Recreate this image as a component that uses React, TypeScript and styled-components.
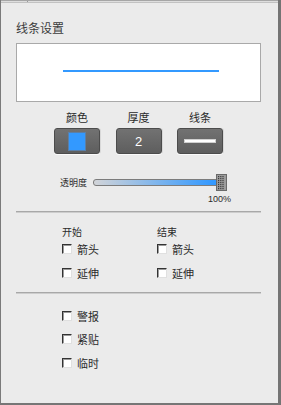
import React from "react";
import styled, { createGlobalStyle } from "styled-components";

const Global = createGlobalStyle`
  html, body { margin: 0; padding: 0; background: #ebebeb; }
  body { font-family: "Noto Sans CJK SC", "Liberation Sans", sans-serif; }
  * { box-sizing: border-box; }
`;

const Panel = styled.div`
  width: 281px;
  height: 405px;
  background: #ebebeb;
  border-left: 1px solid #7a7a7a;
  border-right: 3px solid #747474;
  border-bottom: 2px solid #767676;
  display: flex;
  flex-direction: column;
  color: #2a2a2a;
`;

const TopStrip = styled.div`
  height: 3px;
  display: flex;
  background: #dedede;
  border-top: 1px solid #a6a6a6;
  border-bottom: 1px solid #c2c2c2;
`;

const Tick = styled.div`
  margin-left: 26px;
  width: 1px;
  background: #9a9a9a;
`;

const Content = styled.div`
  padding: 0 17px 0 15px;
  display: flex;
  flex-direction: column;
`;

const Title = styled.div`
  margin-top: 17px;
  font-size: 12px;
  line-height: 16px;
  color: #3c3c3c;
`;

const Preview = styled.div`
  margin-top: 7px;
  height: 59px;
  background: #fff;
  border: 1px solid #a9a9a9;
  padding-top: 26px;
  padding-left: 46px;
`;

const PreviewLine = styled.div`
  width: 156px;
  height: 2px;
  background: #3399ff;
`;

const Controls = styled.div`
  margin-top: 8px;
  display: flex;
  justify-content: center;
  gap: 15.5px;
`;

const ControlCol = styled.div`
  width: 46px;
  display: flex;
  flex-direction: column;
  align-items: center;
  gap: 4px;
`;

const ControlLabel = styled.div`
  font-size: 11px;
  line-height: 14px;
  color: #2a2a2a;
`;

const ToolButton = styled.div`
  width: 46px;
  height: 26px;
  border-radius: 3px;
  border: 1px solid #4c4c4c;
  background: linear-gradient(#727272, #5e5e5e);
  box-shadow: 0 1px 0 #fafafa, 1px 0 0 #d8d8d8;
  display: flex;
  align-items: center;
  justify-content: center;
  color: #fff;
  font-family: "Liberation Sans", sans-serif;
  font-size: 13px;
`;

const Swatch = styled.div<{ $color: string }>`
  width: 18px;
  height: 19px;
  background: ${(p) => p.$color};
  border: 1px solid #5a7fa8;
`;

const LineSample = styled.div`
  width: 32px;
  height: 4px;
  background: #fff;
  border: 1px solid #d0d0d0;
`;

const SliderRow = styled.div`
  margin-top: 20px;
  padding-left: 44px;
  display: flex;
  align-items: center;
  gap: 6px;
  height: 17px;
`;

const SmallLabel = styled.div`
  font-size: 9px;
  line-height: 11px;
  color: #2a2a2a;
`;

const TrackWrap = styled.div`
  position: relative;
  width: 134px;
  height: 17px;
  display: flex;
  align-items: center;
`;

const Track = styled.div`
  width: 127px;
  height: 7px;
  border-radius: 3px;
  border: 1px solid #7c7c7c;
  background: linear-gradient(to right, #d2d4d8, #3399ff 95%);
`;

const Thumb = styled.svg`
  position: absolute;
  left: 123px;
  top: 0;
`;

const Percent = styled.div`
  margin-top: 3px;
  margin-left: 192px;
  font-family: "Liberation Sans", sans-serif;
  font-size: 9px;
  line-height: 11px;
  color: #2a2a2a;
`;

const Separator = styled.div<{ $top: number }>`
  margin-top: ${(p) => p.$top}px;
  height: 2px;
  border-top: 1px solid #a8a8a8;
  border-bottom: 1px solid #cdcdcd;
`;

const Columns = styled.div`
  margin-top: 14px;
  padding-left: 46px;
  display: flex;
`;

const Column = styled.div`
  width: 95px;
  display: flex;
  flex-direction: column;
`;

const ColHeader = styled.div`
  font-size: 10px;
  line-height: 10px;
  color: #2a2a2a;
`;

const CheckRow = styled.div<{ $h: number }>`
  height: ${(p) => p.$h}px;
  display: flex;
  align-items: center;
  gap: 5px;
  font-size: 11px;
  color: #2a2a2a;
`;

const CheckBox = styled.span`
  width: 10px;
  height: 10px;
  background: #fff;
  border-top: 1px solid #333;
  border-left: 1px solid #333;
  border-right: 1px solid #e0e0e0;
  border-bottom: 1px solid #e0e0e0;
  box-shadow: inset 1px 1px 0 #9a9a9a;
`;

const Options = styled.div`
  margin-top: 10px;
  padding-left: 46px;
  display: flex;
  flex-direction: column;
`;

const Check = ({ label, h = 24 }: { label: string; h?: number }) => (
  <CheckRow $h={h}>
    <CheckBox />
    <span>{label}</span>
  </CheckRow>
);

const ThumbIcon = () => {
  const dots: React.ReactNode[] = [];
  for (let r = 0; r < 7; r++) {
    for (let c = 0; c < 3; c++) {
      dots.push(<rect key={`${r}-${c}`} x={2 + c * 2.2} y={2 + r * 2} width={1.2} height={1.2} fill="#3a3a3a" />);
    }
  }
  return (
    <Thumb width="11" height="17" viewBox="0 0 11 17">
      <rect x="0.5" y="0.5" width="10" height="16" fill="#9c9c9c" stroke="#6a6a6a" />
      {dots}
    </Thumb>
  );
};

export default function App() {
  return (
    <>
      <Global />
      <Panel>
        <TopStrip>
          <Tick />
        </TopStrip>
        <Content>
          <Title>线条设置</Title>
          <Preview>
            <PreviewLine />
          </Preview>
          <Controls>
            <ControlCol>
              <ControlLabel>颜色</ControlLabel>
              <ToolButton>
                <Swatch $color="#3399ff" />
              </ToolButton>
            </ControlCol>
            <ControlCol>
              <ControlLabel>厚度</ControlLabel>
              <ToolButton>2</ToolButton>
            </ControlCol>
            <ControlCol>
              <ControlLabel>线条</ControlLabel>
              <ToolButton>
                <LineSample />
              </ToolButton>
            </ControlCol>
          </Controls>
          <SliderRow>
            <SmallLabel>透明度</SmallLabel>
            <TrackWrap>
              <Track />
              <ThumbIcon />
            </TrackWrap>
          </SliderRow>
          <Percent>100%</Percent>
          <Separator $top={6} />
          <Columns>
            <Column>
              <ColHeader>开始</ColHeader>
              <Check label="箭头" />
              <Check label="延伸" />
            </Column>
            <Column>
              <ColHeader>结束</ColHeader>
              <Check label="箭头" />
              <Check label="延伸" />
            </Column>
          </Columns>
          <Separator $top={7} />
          <Options>
            <Check label="警报" h={23.5} />
            <Check label="紧贴" h={23.5} />
            <Check label="临时" h={23.5} />
          </Options>
        </Content>
      </Panel>
    </>
  );
}
